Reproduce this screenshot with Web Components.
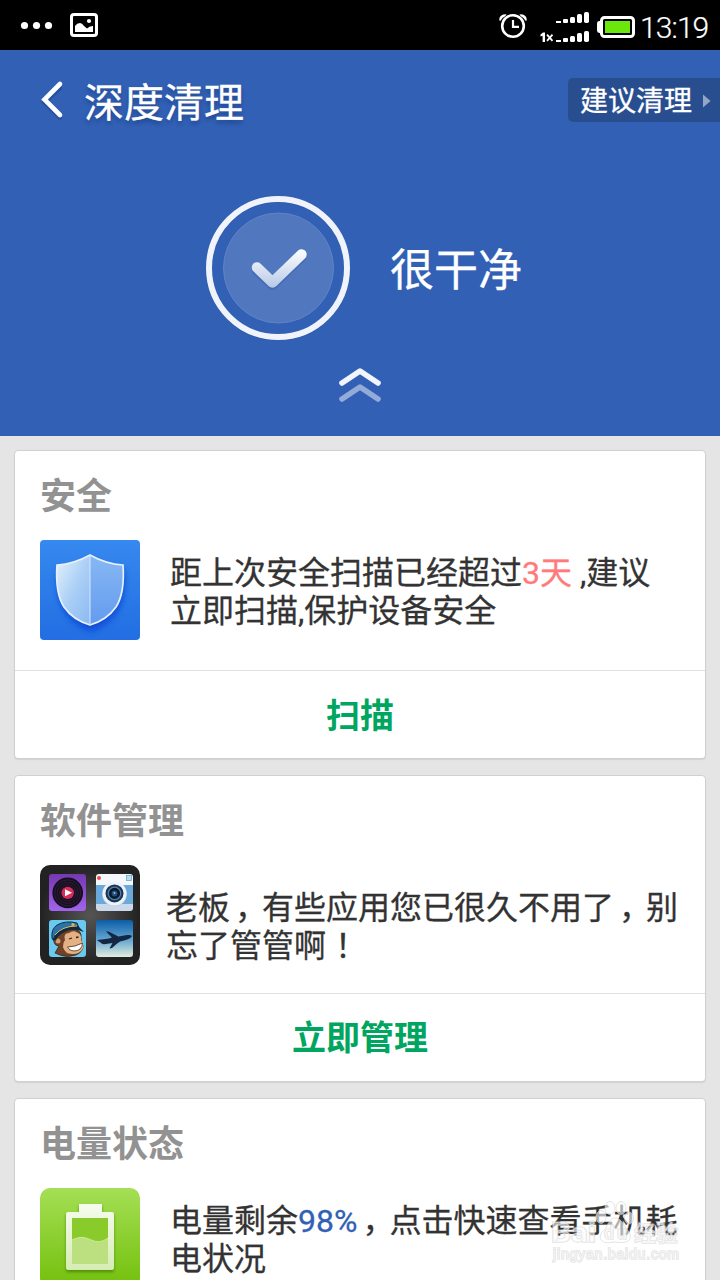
<!DOCTYPE html>
<html lang="zh-CN">
<head>
<meta charset="utf-8">
<title>深度清理</title>
<style>
html,body{margin:0;height:1280px;overflow:hidden;background:#e5e5e5}
body{font-family:Roboto,"Noto Sans CJK SC",sans-serif}
</style>
</head>
<body>
<clean-app></clean-app>
<script>
function define(name, html) {
  const t = document.createElement('template');
  t.innerHTML = html;
  customElements.define(name, class extends HTMLElement {
    constructor() {
      super();
      this.attachShadow({mode: 'open'}).appendChild(t.content.cloneNode(true));
    }
  });
}

define('status-bar', `
<style>
:host{display:flex;height:50px;background:#000;color:#fff;justify-content:space-between}
svg{display:block}
.right{display:flex}
.time{width:80px;height:50px;font:300 30px/55px Roboto,sans-serif;letter-spacing:-.9px;white-space:nowrap;-webkit-text-stroke:.2px #fff}
</style>
<svg width="110" height="50" fill="#fff">
  <circle cx="24.5" cy="25.5" r="3.6"/><circle cx="36.5" cy="25.5" r="3.6"/><circle cx="48.5" cy="25.5" r="3.6"/>
  <rect x="71.5" y="14.5" width="25" height="21" rx="2.5" fill="none" stroke="#fff" stroke-width="3"/>
  <circle cx="89" cy="21" r="2.1"/>
  <path d="M75 32V26Q77 23 80 23Q82 23 84 26L87 28.5L90 26.5L93 26V32Z"/>
</svg>
<div class="right">
<svg width="144" height="50" viewBox="496 0 144 50" fill="#fff">
  <circle cx="513" cy="26" r="10.8" fill="none" stroke="#fff" stroke-width="2.6"/>
  <path d="M513 20V26.8H519" fill="none" stroke="#fff" stroke-width="2.2"/>
  <path d="M499.3 20.5Q498.8 14 506.5 14.2L505.5 16Q502 17.5 500.5 20.8ZM526.7 20.5Q527.2 14 519.5 14.2L520.5 16Q524 17.5 525.5 20.8Z"/>
  <path d="M540.5 34.5L543 32.6H545V42H542.6V35.8L540.5 36.6Z"/>
  <path d="M547 34.7L552.5 40.8M552.5 34.7L547 40.8" stroke="#fff" stroke-width="1.8"/>
  <path d="M556 21h5v2h-5zM556 40h5v2h-5z"/>
  <rect x="563" y="19" width="5" height="4" rx="1"/><rect x="570" y="17" width="5" height="6" rx="1.5"/><rect x="577" y="14" width="5" height="9" rx="1.8"/><rect x="584" y="12" width="5" height="11" rx="1.8"/>
  <rect x="563" y="38" width="5" height="4" rx="1"/><rect x="570" y="36" width="5" height="6" rx="1.5"/><rect x="577" y="33" width="5" height="9" rx="1.8"/><rect x="584" y="31" width="5" height="11" rx="1.8"/>
  <rect x="597" y="21" width="6" height="12" rx="2.4"/>
  <rect x="601.5" y="17.5" width="32" height="19" rx="3" fill="none" stroke="#fff" stroke-width="3"/>
  <rect x="605" y="21" width="25" height="12" fill="#6ae80e"/>
</svg>
<div class="time">13:19</div>
</div>`);

define('page-hero', `
<style>
:host{display:block;height:386px;background:#3160b5;color:#fff;-webkit-text-stroke:.3px #fff}
header{display:flex;height:146px}
.back{width:84px;height:100px;display:block}
h1{margin:0;font-size:40px;line-height:107px;font-weight:400;flex:1;text-shadow:0 3px 4px rgba(10,30,80,.4);white-space:nowrap}
.tip{box-sizing:border-box;margin-top:28px;width:152px;height:44px;padding:4px 0 0 12px;background:#284e90;border-radius:5px 0 0 5px;display:flex;align-items:center;font-size:28px;line-height:40px;white-space:nowrap}
.tip svg{margin:-3px 0 0 9px}
.state{display:flex;height:144px;padding-left:206px}
.state span{font-size:44px;line-height:151px;margin-left:40px}
.up{display:block;margin:26px auto 0}
</style>
<header>
 <svg class="back" viewBox="0 0 84 100"><path d="M60 36L44.5 50.5L60 65.5" transform="translate(0 2)" stroke="#1c4286" opacity=".5" stroke-width="4.4" fill="none" stroke-linecap="round"/><path d="M60 34L44.5 49.5L60 65" stroke="#fff" stroke-width="4.6" fill="none" stroke-linecap="round"/></svg>
 <h1>深度清理</h1>
 <div class="tip">建议清理<svg width="12" height="14"><path d="M2 .5L9.5 7L2 13.5Z" fill="#93a6c8"/></svg></div>
</header>
<div class="state">
 <svg width="144" height="144">
  <defs><linearGradient id="c" gradientUnits="userSpaceOnUse" x1="0" y1="53" x2="0" y2="92"><stop stop-color="#fff"/><stop offset="1" stop-color="#b7c8e6"/></linearGradient></defs>
  <circle cx="72" cy="72.8" r="69" fill="none" stroke="#274f9b" stroke-width="6" opacity=".45"/>
  <circle cx="72" cy="72" r="69" fill="none" stroke="#f0f3fa" stroke-width="6"/>
  <circle cx="72.5" cy="72" r="55" fill="#5178bf" stroke="#6083c6"/>
  <path d="M51 73L66.500 87.500L95.500 59" transform="translate(0 1.500)" fill="none" stroke="#34599f" opacity=".35" stroke-width="10.500" stroke-linecap="round" stroke-linejoin="round"/>
  <path d="M51 71.500L66.500 86.500L95.500 58.500" fill="none" stroke="url(#c)" stroke-width="10.5" stroke-linecap="round" stroke-linejoin="round"/>
 </svg>
 <span>很干净</span>
</div>
<svg class="up" width="44" height="40" fill="none" stroke-width="5.600" stroke-linecap="round" stroke-linejoin="round"><path d="M4 33L22 21L40 33" stroke="#94abd9"/><path d="M4 17L22 5L40 17" stroke="#f2f5fc"/></svg>`);

define('info-card', `
<style>
:host{display:block;box-sizing:border-box;width:692px;background:#fff;border:1px solid #d0d0d0;border-radius:4px;box-shadow:0 1px 1px rgba(0,0,0,.08);margin-bottom:16px}
.title{padding-left:25px;height:89px;font-size:36px;line-height:93px;font-weight:600;color:#929292}
.body{display:flex;height:var(--body-h,131px);box-sizing:border-box;border-bottom:1px solid #dfdfdf;padding-left:25px}
.icon{width:100px;height:100px}
.text{margin-left:var(--gap,30px);padding-top:var(--top,14px);font-size:32px;line-height:38px;color:#333;white-space:nowrap;-webkit-text-stroke:.3px}
.action{height:87px;line-height:var(--action-line,90px);text-align:center;font-size:34px;font-weight:700;color:#00a65f}
</style>
<div class="title"><slot name="title"></slot></div>
<div class="body"><div class="icon"><slot name="icon"></slot></div><div class="text"><slot></slot></div></div>
<div class="action"><slot name="action"></slot></div>`);

define('text-line', `<style>:host{display:block;height:38px}::slotted(b){font-weight:400;color:var(--mark)}::slotted(i){font-style:normal;padding-left:5px;margin-right:-5px}::slotted(i.mid){padding-left:9px;margin-right:-9px}</style><slot></slot>`);

define('shield-icon', `
<style>:host,svg{display:block}</style>
<svg width="100" height="100"><defs>
<linearGradient id="b" x2="0" y2="1"><stop stop-color="#3689ef"/><stop offset="1" stop-color="#226ee2"/></linearGradient>
<linearGradient id="l" x2="1" y2="1"><stop stop-color="#e6f2fd"/><stop offset=".5" stop-color="#acd0f6"/><stop offset="1" stop-color="#8ab9f2"/></linearGradient>
<linearGradient id="r" x2="0" y2="1"><stop stop-color="#87b8f4"/><stop offset="1" stop-color="#639bee"/></linearGradient>
<filter id="f" x="-30%" y="-30%" width="160%" height="160%"><feGaussianBlur stdDeviation="3"/></filter></defs>
<rect width="100" height="100" rx="4" fill="url(#b)"/>
<path d="M50 15Q34 24 17 25Q15 53 24 67Q33 80 50 86Q67 80 76 67Q85 53 83 25Q66 24 50 15Z" fill="#0845d7" opacity=".9" transform="translate(1 5)" filter="url(#f)"/>
<path d="M50 15Q34 24 17 25Q15 53 24 67Q33 80 50 85Z" fill="url(#l)"/>
<path d="M50 15Q66 24 83 25Q85 53 76 67Q67 80 50 85Z" fill="url(#r)"/>
<path d="M50 15Q34 24 17 25Q15 53 24 67Q33 80 50 85Q67 80 76 67Q85 53 83 25Q66 24 50 15Z" fill="none" stroke="#e7f1fd" stroke-width="1.700"/><path d="M50 15V85" stroke="#d8e8fb" stroke-width="1"/></svg>`);

define('apps-icon', `
<style>:host,svg{display:block}</style>
<svg width="100" height="100"><defs>
<radialGradient id="k"><stop stop-color="#555"/><stop offset="1" stop-color="#222"/></radialGradient>
<linearGradient id="p" x2="0" y2="1"><stop stop-color="#7438b0"/><stop offset="1" stop-color="#a264eb"/></linearGradient>
<linearGradient id="s" x2="0" y2="1"><stop stop-color="#0b5da8"/><stop offset=".55" stop-color="#66a8d1"/><stop offset="1" stop-color="#e4edde"/></linearGradient>
<clipPath id="cm"><rect x="56" y="9" width="37" height="37" rx="3"/></clipPath></defs>
<rect width="100" height="100" rx="10" fill="url(#k)"/>
<rect x="9" y="9" width="37" height="37" rx="3" fill="url(#p)"/>
<circle cx="27.700" cy="27.900" r="15.300" fill="#170e20"/><g fill="none" stroke="#3a2a43" stroke-width=".6"><circle cx="27.700" cy="27.900" r="13"/><circle cx="27.700" cy="27.900" r="10.500"/><circle cx="27.700" cy="27.900" r="8"/></g>
<circle cx="27.700" cy="27.900" r="6.200" fill="#d52d58"/><path d="M25 24.300L32 27.800L25 31.200Z" fill="#fff"/>
<g clip-path="url(#cm)"><path fill="#f4f8fc" d="M56 9h37v11H56z"/><path fill="#69a9dc" d="M56 20h37v19H56z"/><path fill="#cbd8ea" d="M56 39h37v7H56z"/></g>
<circle cx="59" cy="13" r="2" fill="#ec474d"/><rect x="86.500" y="10.500" width="5" height="5" fill="#b8deef" stroke="#68aad0" stroke-width=".8"/>
<circle cx="74.500" cy="29.400" r="12.200" fill="#bed0e2"/><circle cx="74.500" cy="28.600" r="12" fill="#edf3f9"/><circle cx="74.500" cy="28.400" r="9" fill="#193457"/><circle cx="74.500" cy="28.400" r="6.200" fill="#0a182b" stroke="#5180a6" stroke-width="1.300"/><circle cx="74.500" cy="28.400" r="3" fill="#254e79"/><circle cx="74.500" cy="28" r="1" fill="#9ac5ea"/>
<rect x="9" y="55" width="37" height="37" rx="3" fill="#69c9ef"/>
<path d="M16 70Q12 72 14 77Q15 81 19 81L15 88L20 90Q27 93 36 90Q43 87 43 81Q41 77 41 73Q42 66 35 64Q25 62 20 67Z" fill="#704329" stroke="#38251d" stroke-width=".8"/>
<path d="M25 75Q23 68 29 68Q33 65 37 67.500Q42 69 41 75Q45 80 42 85Q37 91 27 88Q20 82 25 75Z" fill="#e3b183"/>
<path d="M27.500 82Q35 82 42.500 78Q42 86 34 86Q29 86 27.500 82Z" fill="#fff" stroke="#4b2d1c" stroke-width=".8"/><circle cx="18" cy="76" r="2.500" fill="#d49a70"/>
<path d="M29 74l3-1M36 72.500l2.500-.5" stroke="#362018" stroke-width="1.300"/>
<path d="M12 73Q11 64 17 60Q26 55 37 58L39 63Q25 62 19 69L13 75Z" fill="#2a72a9" stroke="#172d40" stroke-width="1"/>
<path d="M13 74Q18 61 38 61L44 67Q32 62 23 68Q17 71 16 76Z" fill="#172a3c"/><path d="M15 70Q22 61 37 61" stroke="#deb95b" stroke-width="1" fill="none"/><circle cx="33" cy="59.500" r="1.600" fill="#e2b43e"/>
<rect x="56" y="55" width="37" height="37" rx="3" fill="url(#s)"/>
<path d="M57 75Q64 74 69 73.500L72 72.500L66 66.500L68.500 66.500L78.500 71.500L87 70Q91 69.500 92 71Q91 73.500 84 75.500L80 76.500Q76 79 72 83L69.500 83.500L72.500 78Q65 79.500 62.500 79Z" fill="#132743"/></svg>`);

define('battery-icon', `
<style>:host,svg{display:block}</style>
<svg width="100" height="100"><defs><linearGradient id="g" x2="0" y2="1"><stop stop-color="#a5df55"/><stop offset="1" stop-color="#73bf0b"/></linearGradient>
<linearGradient id="o" x2="0" y2="1"><stop stop-color="#f7fcee"/><stop offset="1" stop-color="#d6ecb3"/></linearGradient>
<filter id="f" x="-20%" y="-20%" width="140%" height="140%"><feGaussianBlur stdDeviation="1.700"/></filter></defs>
<rect width="100" height="100" rx="10" fill="url(#g)"/>
<path d="M26 26.500Q26 24 28 24H39V16H62V24H72Q74 24 74 26V80Q74 82 72 82H28Q26 82 26 80Z" fill="#3e7c00" opacity=".75" transform="translate(0 2)" filter="url(#f)"/>
<path d="M32 30H68V76H32Z" fill="#88cb2b"/>
<path d="M32 52Q41 47 50 51.500Q60 56.500 68 50V76H32Z" fill="#bce080"/><path d="M32 52Q41 47 50 51.500Q60 56.500 68 50" fill="none" stroke="#caeb94"/>
<path d="M26 26Q26 24 28 24H39V16H62V24H72Q74 24 74 26V80Q74 82 72 82H28Q26 82 26 80ZM32 30V76H68V30Z" fill="url(#o)" fill-rule="evenodd"/></svg>`);

define('water-mark', `
<style>
:host{position:absolute;left:550px;top:1200px;width:134px;height:68px}
svg{display:block}
text{fill:rgba(255,255,255,.6);stroke:rgba(205,205,205,.55);stroke-width:1.500px;paint-order:stroke}
</style>
<svg width="134" height="68"><g fill="#fff" fill-opacity=".6" stroke="#d2d2d2" stroke-opacity=".6"><ellipse cx="51" cy="17" rx="5" ry="6.500"/><ellipse cx="60" cy="8" rx="5" ry="6.500"/><ellipse cx="71" cy="8" rx="5" ry="6.500"/><ellipse cx="79" cy="18" rx="4.500" ry="6"/><path d="M65 18Q71 18 75 27Q82 34 80 39Q78 44 65 42Q51 45 50 37Q50 33 56 28Q60 18 65 18Z"/></g>
<text x="1" y="42" font-family="Roboto" font-size="27" font-weight="700" textLength="45" lengthAdjust="spacingAndGlyphs">Bai</text>
<text x="54" y="39" font-family="Roboto" font-size="18" font-weight="500" textLength="23">du</text>
<text x="84" y="41" font-family="Noto Sans CJK SC" font-size="22" font-weight="500">经验</text>
<text x="3" y="59" font-family="Liberation Sans" font-size="14" textLength="126">jingyan.baidu.com</text></svg>`);

define('clean-app', `
<style>
:host{display:block;position:relative;width:720px;height:1280px;overflow:hidden;background:#e5e5e5}
main{padding:14px 14px 0}
.soft{--body-h:129px;--gap:26px;--top:24px;--action-line:89px}
.power{--mark:#3160b5}
.safe{--mark:#ff7b7b}
</style>
<status-bar></status-bar>
<page-hero></page-hero>
<main>
<info-card class="safe"><span slot="title">安全</span><shield-icon slot="icon"></shield-icon>
<text-line>距上次安全扫描已经超过<b>3天</b> ,建议</text-line><text-line>立即扫描,保护设备安全</text-line><span slot="action">扫描</span></info-card>
<info-card class="soft"><span slot="title">软件管理</span><apps-icon slot="icon"></apps-icon>
<text-line>老板<i>，</i>有些应用您已很久不用了<i>，</i>别</text-line><text-line>忘了管管啊<i class="mid">！</i></text-line><span slot="action">立即管理</span></info-card>
<info-card class="power"><span slot="title">电量状态</span><battery-icon slot="icon"></battery-icon>
<text-line>电量剩余<b>98%</b><i>，</i>点击快速查看手机耗</text-line><text-line>电状况</text-line></info-card>
</main>
<water-mark></water-mark>`);
</script>
</body>
</html>
